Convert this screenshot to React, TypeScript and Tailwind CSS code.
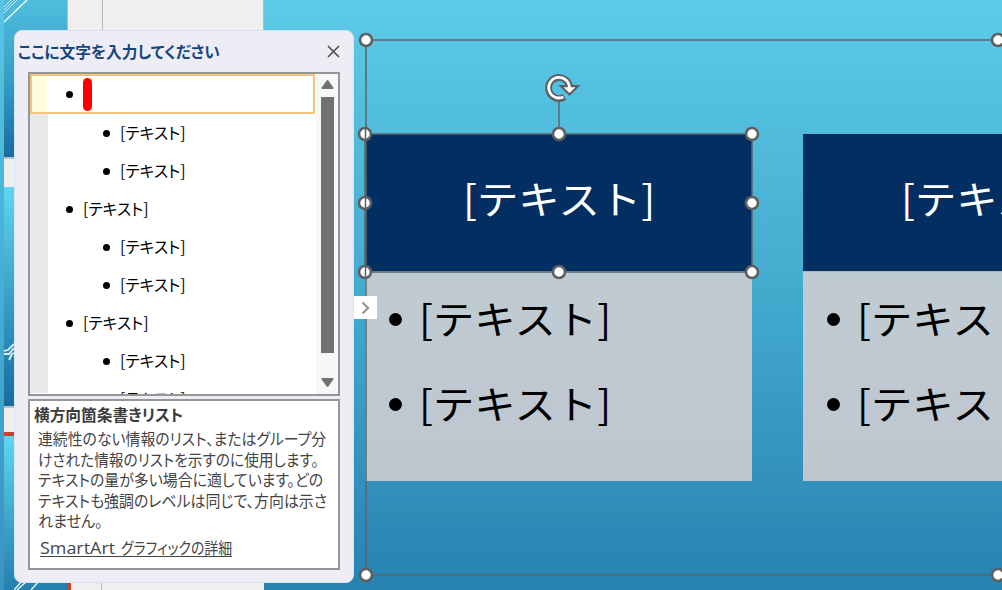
import { useLayoutEffect, useRef, useState } from "react";

type FitTextProps = {
  text: string;
  width: number;
  className?: string;
};

// Condenses a single line horizontally so it takes exactly `width` pixels
function FitText({ text, width, className = "" }: FitTextProps) {
  const ref = useRef<HTMLSpanElement>(null);
  const [scale, setScale] = useState(1);

  useLayoutEffect(() => {
    if (ref.current) {
      setScale(width / ref.current.offsetWidth);
    }
  }, [text, width]);

  return (
    <span className="block" style={{ width }}>
      <span
        ref={ref}
        className={`block w-max origin-left whitespace-nowrap ${className}`}
        style={{ transform: `scaleX(${scale})` }}
      >
        {text}
      </span>
    </span>
  );
}

const outline = [
  { level: 2, text: "[テキスト]" },
  { level: 2, text: "[テキスト]" },
  { level: 1, text: "[テキスト]" },
  { level: 2, text: "[テキスト]" },
  { level: 2, text: "[テキスト]" },
  { level: 1, text: "[テキスト]" },
  { level: 2, text: "[テキスト]" },
  { level: 2, text: "[テキスト]" },
];

const description = [
  { text: "連続性のない情報のリスト、またはグループ分", width: 288 },
  { text: "けされた情報のリストを示すのに使用します。", width: 281 },
  { text: "テキストの量が多い場合に適しています。どの", width: 285 },
  { text: "テキストも強調のレベルは同じで、方向は示さ", width: 289 },
  { text: "れません。", width: 65 },
];

// Center points of the resize handles on the slide
const handles = [
  { x: 366, y: 40 },
  { x: 998, y: 40 },
  { x: 366, y: 575 },
  { x: 998, y: 575 },
  { x: 365, y: 134 },
  { x: 559, y: 134 },
  { x: 752, y: 134 },
  { x: 365, y: 203 },
  { x: 752, y: 203 },
  { x: 365, y: 272 },
  { x: 559, y: 272 },
  { x: 752, y: 272 },
];

function Thumbnails() {
  return (
    <div className="absolute inset-y-0 left-0 flex w-[264px]">
      <div className="w-1 bg-gradient-to-b from-[#56c6e4] to-[#3994bd]" />
      <div className="flex w-[63px] flex-col">
        <div className="relative h-[157px] overflow-hidden bg-gradient-to-b from-[#4fbcdd] via-[#379fc6] to-[#176c9e]">
          <svg className="absolute left-0 top-0" width="30" height="24" fill="none" stroke="#e8f8fd">
            <path d="M0 7L7 0M0 10L10 0M0 13L13 0" strokeWidth="1" opacity="0.8" />
            <path d="M0 22L23 0" strokeWidth="1.5" />
          </svg>
        </div>
        <div className="h-[30px] border-t-2 border-[#b9c2c8] bg-[#eeeeef]" />
        <div className="relative h-[219px] overflow-hidden bg-gradient-to-b from-[#5fd6f2] to-[#176c9e]">
          <svg className="absolute left-0 top-[155px]" width="12" height="20" fill="none" stroke="#d9f0f8" strokeWidth="1.8">
            <path d="M0 9L4 8L10 2M0 12L5 12L10 6M5 18L8 12L10 11" />
          </svg>
        </div>
        <div className="h-[26px] border-t-2 border-[#b9c2c8] bg-[#eeeeef]" />
        <div className="h-1 bg-[#c8432c]" />
        <div className="relative flex-1 bg-gradient-to-b from-[#5fd6f2] to-[#237fae]">
          <svg className="absolute bottom-0 left-[10px]" width="30" height="10" fill="none" stroke="#e8f8fd" strokeWidth="1.4">
            <path d="M0 10L8 1M3 10L13 1M17 10L25 1" />
          </svg>
        </div>
      </div>
      <div className="flex flex-1 flex-col justify-between">
        <div className="flex h-[34px] border-l border-r border-[#b9b9b9] bg-[#efefef]">
          <div className="w-[35px] border-r border-[#b9b9b9]" />
        </div>
        <div className="flex h-[10px] border-l-4 border-[#c8432c] bg-[#efefef]">
          <div className="w-[31px] border-r border-[#b9b9b9]" />
        </div>
      </div>
    </div>
  );
}

function SlideText({ text }: { text: string }) {
  return <FitText text={text} width={192} className="text-[39px] leading-[60px] font-normal" />;
}

function SlideCard() {
  return (
    <div className="w-[387px] shrink-0">
      <div className="flex h-[137px] items-center justify-center bg-[#032e61] pb-[11px] text-white">
        <SlideText text="[テキスト]" />
      </div>
      <ul className="flex h-[210px] flex-col gap-[25px] border-t border-[#aab8c6] bg-gradient-to-b from-[#bfcbd2] to-[#bfc6d0] pl-6 pt-[15px] text-black">
        <li className="flex items-center gap-[17px]">
          <span className="mt-[5px] size-[13px] rounded-full bg-black" />
          <SlideText text="[テキスト]" />
        </li>
        <li className="flex items-center gap-[17px]">
          <span className="mt-[5px] size-[13px] rounded-full bg-black" />
          <SlideText text="[テキスト]" />
        </li>
      </ul>
    </div>
  );
}

function Selection() {
  return (
    <svg className="absolute inset-0" width="1002" height="590" fill="none">
      <g stroke="#5c6468" strokeWidth="1.5">
        <path d="M998 40H366V575H998" />
        <path d="M365 134H752V272H365Z" />
        <path d="M559 100V134" />
      </g>
      {handles.map((h) => (
        <circle key={`${h.x}-${h.y}`} cx={h.x} cy={h.y} r="6" fill="#fff" stroke="#5d6062" strokeWidth="2.6" />
      ))}
      <path d="M365.5 128V140M365.5 197V209M365.5 266V278" stroke="#5d6062" strokeWidth="1.5" />
      {/* Rotate handle */}
      <path d="M564.5 97A10.5 10.5 0 1 1 569.5 87" stroke="#5d6062" strokeWidth="6.8" />
      <path d="M561 86.2H578L569.5 94.5Z" fill="#fff" stroke="#5d6062" strokeWidth="2.2" />
      <path d="M563.3 97A10.3 10.3 0 1 1 569.3 88.5" stroke="#fff" strokeWidth="2.8" />
    </svg>
  );
}

function OutlineList() {
  return (
    <div className="flex h-[324px] overflow-hidden border-2 border-[#969696] bg-white">
      <div className="w-[286px] shrink-0 bg-white">
        <div className="mr-px flex h-10 items-center border-2 border-[#f5c27c] bg-white">
          <div className="h-full w-[15px] bg-[#fffddc]" />
          <span className="ml-[19px] size-[7px] rounded-full bg-black" />
          <span className="ml-[10px] mt-px h-[33px] w-[9px] rounded-full bg-[#fe0000]" />
        </div>
        <div className="flex h-[280px] overflow-hidden">
          <div className="mb-px w-[18px] shrink-0 bg-[#e9e9e9]" />
          <ul>
            {outline.map((item, i) => (
              <li
                key={i}
                className={`flex h-[38px] items-center gap-[10px] text-black ${item.level === 1 ? "pl-[18px]" : "pl-[55px]"}`}
              >
                <span className="size-[7px] rounded-full bg-black" />
                <FitText text={item.text} width={66} className="-mt-[3px] text-[16px] leading-6" />
              </li>
            ))}
          </ul>
        </div>
      </div>
      <div className="flex flex-1 flex-col items-center justify-between bg-[#f7f7f7] pb-[6px] pt-[5px]">
        <svg width="13" height="11" fill="#717171" stroke="#717171" strokeLinejoin="round" strokeWidth="2">
          <path d="M6.5 2L11.5 9H1.5Z" />
        </svg>
        <div className="mb-auto mt-[7px] h-[256px] w-[13px] bg-[#717171]" />
        <svg width="13" height="10" fill="#717171" stroke="#717171" strokeLinejoin="round" strokeWidth="2">
          <path d="M6.5 8L11.5 1H1.5Z" />
        </svg>
      </div>
    </div>
  );
}

function TextPane() {
  return (
    <div className="absolute left-[14px] top-[30px] flex h-[553px] w-[340px] flex-col rounded-lg border border-[#d5e4ee] bg-[#eeedf5] px-[13px] [font-feature-settings:'palt']">
      <div className="-ml-[10px] flex h-[41px] items-center justify-between">
        <FitText text="ここに文字を入力してください" width={202} className="-mt-px text-[16px] leading-6 font-bold text-[#17477f]" />
        <svg width="13" height="13" fill="none" stroke="#4a4a4a" strokeWidth="1.5">
          <path d="M1 1L12 12M12 1L1 12" />
        </svg>
      </div>
      <OutlineList />
      <div className="mt-[3px] h-[171px] border-2 border-[#969696] bg-white pl-[4px] pt-[3px] text-[#444]">
        <FitText text="横方向箇条書きリスト" width={149} className="text-[16px] leading-[20px] font-bold text-[#3b3b3b]" />
        <div className="pl-1 pt-1">
          {description.map((line) => (
            <FitText key={line.text} text={line.text} width={line.width} className="text-[16px] leading-[20.6px]" />
          ))}
        </div>
        <div className="ml-[6px] mt-[6px] flex h-[20px] w-[192px] justify-between border-b border-[#444]">
          <FitText text="SmartArt" width={75} className="font-['Open_Sans'] text-[16px] leading-[23px]" />
          <FitText text="グラフィックの詳細" width={111} className="text-[16px] leading-[21px]" />
        </div>
      </div>
    </div>
  );
}

export default function App() {
  return (
    <div className="relative h-[590px] w-[1002px] overflow-hidden bg-gradient-to-b from-[#5ccbe8] via-[#43aace] to-[#2782b2] font-['Noto_Sans_CJK_JP',sans-serif]">
      <Thumbnails />
      <div className="flex gap-[51px] pl-[365px] pt-[134px]">
        <SlideCard />
        <SlideCard />
      </div>
      <Selection />
      <TextPane />
      <button className="absolute left-[354px] top-[296px] flex size-[23px] items-center justify-center bg-white">
        <svg width="9" height="14" fill="none" stroke="#9a9a9a" strokeWidth="2.4">
          <path d="M1.5 1.5L7 7L1.5 12.5" />
        </svg>
      </button>
    </div>
  );
}
